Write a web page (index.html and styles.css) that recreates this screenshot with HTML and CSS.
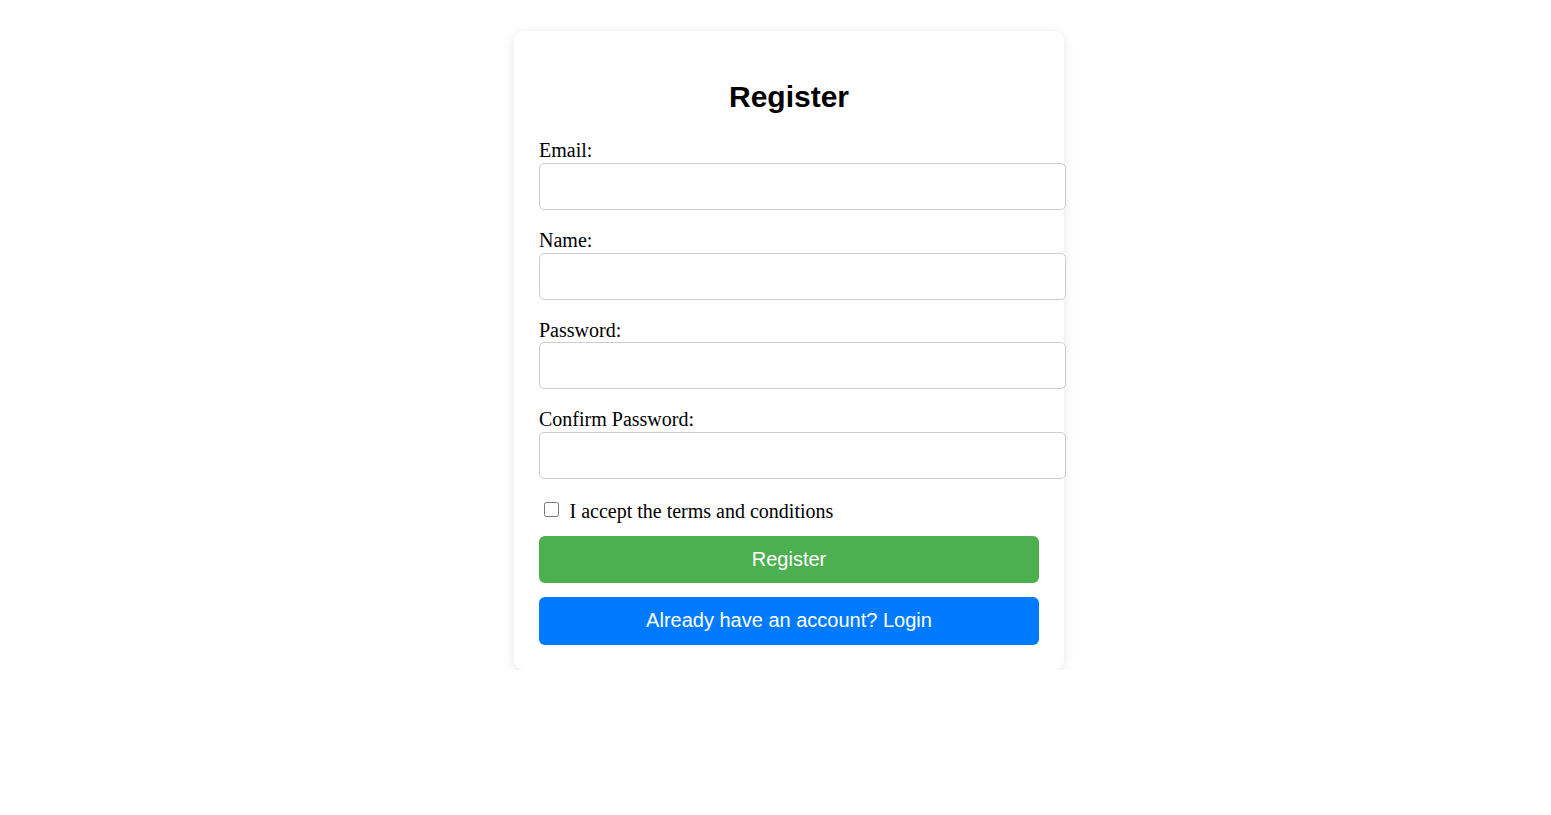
FILE: index.html
```html
<!DOCTYPE html>
<html lang="en">
<head>
<meta charset="utf-8">
<title>Register</title>
<link rel="stylesheet" href="styles.css">
</head>
<body>
<main class="page">
  <form class="card">
    <h2 class="title">Register</h2>
    <div class="field">
      <label class="field-label" for="email">Email:</label>
      <input class="field-input" id="email" type="email">
    </div>
    <div class="field">
      <label class="field-label" for="name">Name:</label>
      <input class="field-input" id="name" type="text">
    </div>
    <div class="field">
      <label class="field-label" for="password">Password:</label>
      <input class="field-input" id="password" type="password">
    </div>
    <div class="field">
      <label class="field-label" for="confirm">Confirm Password:</label>
      <input class="field-input" id="confirm" type="password">
    </div>
    <label class="terms">
      <input class="terms-box" type="checkbox">
      <span class="terms-text">I accept the terms and conditions</span>
    </label>
    <button class="btn btn-register" type="button">Register</button>
    <button class="btn btn-login" type="button">Already have an account? Login</button>
  </form>
</main>
</body>
</html>
```
FILE: styles.css
```css
* {
  box-sizing: border-box;
}

html, body {
  margin: 0;
  padding: 0;
  background: #ffffff;
}

body {
  font-family: "Liberation Serif", "Times New Roman", serif;
  font-size: 20px;
  color: #000;
}

.page {
  display: flex;
  justify-content: center;
  align-items: flex-start;
  padding: 31px 0 0 27px;
}

.card {
  width: 550px;
  padding: 25px;
  background: #fff;
  border-radius: 10px;
  box-shadow: 0 2px 12px rgba(0, 0, 0, 0.1);
}

.title {
  margin: 24px 0 25px;
  font-family: "Liberation Sans", Arial, sans-serif;
  font-size: 30px;
  font-weight: bold;
  text-align: center;
  line-height: normal;
}

.field {
  margin-bottom: 19px;
}

.field-label {
  display: block;
  line-height: 22px;
  margin-bottom: 1.75px;
}

.field-input {
  display: block;
  width: 527px;
  height: 47px;
  margin: 0;
  padding: 0 12px;
  border: 1px solid #cccccc;
  border-radius: 5px;
  font-family: "Liberation Sans", Arial, sans-serif;
  font-size: 20px;
  background: #fff;
}

.terms {
  display: flex;
  align-items: flex-start;
  height: 24px;
  margin-top: 4px;
}

.terms-box {
  width: 15px;
  height: 15px;
  margin: 3.5px 0 0 5px;
  flex: none;
}

.terms-text {
  margin: 2px 0 0 10.5px;
  line-height: 22px;
}

.btn {
  display: flex;
  align-items: center;
  justify-content: center;
  width: 500px;
  height: 47.75px;
  margin: 13.5px 0 0;
  padding: 0;
  border: none;
  border-radius: 6px;
  color: #ffffff;
  font-family: "Liberation Sans", Arial, sans-serif;
  font-size: 20px;
  cursor: pointer;
}

.btn-register {
  background: #4caf50;
}

.btn-login {
  background: #007bff;
}
```
